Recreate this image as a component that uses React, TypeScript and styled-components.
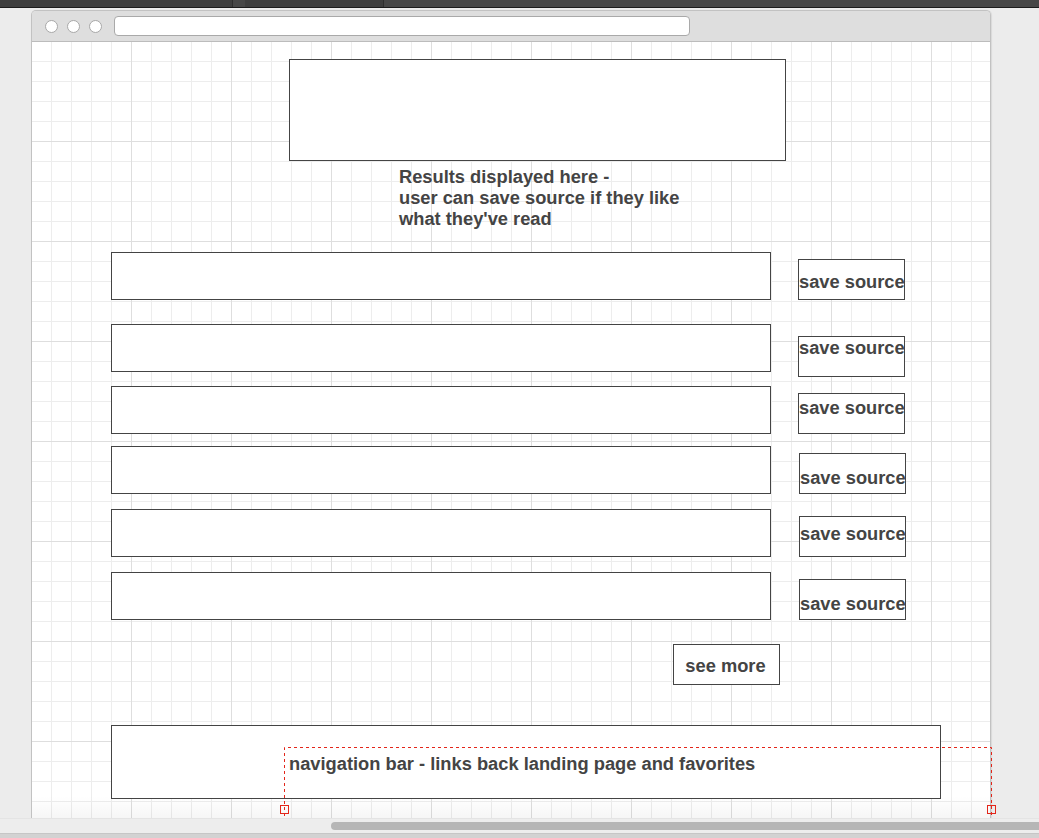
import { FC } from 'react';
import styled, { createGlobalStyle } from 'styled-components';

const GlobalStyle = createGlobalStyle`
  html, body {
    margin: 0;
    padding: 0;
    background: #ececec;
    overflow: hidden;
  }
  body {
    font-family: 'Liberation Sans', Arial, Helvetica, sans-serif;
  }
`;

const Page = styled.div`
  width: 1039px;
  height: 838px;
  display: flex;
  flex-direction: column;
  overflow: hidden;
  background: #ececec;
`;

const TopStrip = styled.div`
  height: 7px;
  flex-shrink: 0;
  display: flex;
  gap: 12px;
  background: #474747;
  border-bottom: 1px solid #1c1c1c;
`;

const Tab = styled.div<{ $w: number }>`
  width: ${(p) => p.$w}px;
  background: #3e3e3e;
  border-right: 1px solid #2e2e2e;
`;

const Stage = styled.div`
  height: 810px;
  flex-shrink: 0;
  box-sizing: border-box;
  padding: 2px 0 0 31px;
  display: flex;
`;

const Window = styled.div`
  width: 960px;
  display: flex;
  flex-direction: column;
  box-sizing: border-box;
  border: 1px solid #c2c2c2;
  border-bottom: none;
  border-radius: 5px 5px 0 0;
  box-shadow: 1px 0 1px rgba(0, 0, 0, 0.08);
`;

const TitleBar = styled.div`
  height: 31px;
  flex-shrink: 0;
  display: flex;
  align-items: center;
  gap: 9px;
  padding-left: 13px;
  box-sizing: border-box;
  background: #dedede;
  border-bottom: 1px solid #bcbcbc;
  border-radius: 4px 4px 0 0;
`;

const Light = styled.span`
  width: 13px;
  height: 13px;
  border-radius: 50%;
  box-sizing: border-box;
  background: #fff;
  border: 1px solid #a8a8a8;
`;

const AddressBar = styled.div`
  width: 576px;
  height: 20px;
  margin-left: 3px;
  box-sizing: border-box;
  background: #fff;
  border: 1px solid #a9a9a9;
  border-radius: 4px;
`;

const Canvas = styled.div`
  position: relative;
  flex: 1;
  display: flex;
  flex-direction: column;
  align-items: flex-start;
  padding-top: 17px;
  box-sizing: border-box;
  background-color: #fff;
  background-image: linear-gradient(to bottom, transparent 754px, rgba(0, 0, 0, 0.035)),
    linear-gradient(to right, #dedede 1px, transparent 1px),
    linear-gradient(to bottom, #dedede 1px, transparent 1px),
    linear-gradient(to right, #ededed 1px, transparent 1px),
    linear-gradient(to bottom, #ededed 1px, transparent 1px);
  background-size: 100% 100%, 100px 100px, 100px 100px, 20px 20px, 20px 20px;
  background-position: 0 0, -1px -1px, -1px -1px, -1px -1px, -1px -1px;
  font-weight: bold;
  color: #444;
  font-size: 18.3px;
`;

const Frame = styled.div`
  box-sizing: border-box;
  background: #fff;
  border: 1px solid #444;
`;

const HeroBox = styled(Frame)`
  margin-left: 257px;
  width: 497px;
  height: 102px;
`;

const Caption = styled.div`
  margin: 5px 0 0 367px;
  line-height: 21px;
  white-space: pre-line;
`;

const ResultsList = styled.div`
  margin-top: 23px;
  display: flex;
  flex-direction: column;
`;

const ResultRow = styled.div<{ $gap: number }>`
  display: flex;
  align-items: flex-end;
  margin: ${(p) => p.$gap}px 0 0 79px;
`;

const ResultBox = styled(Frame)`
  width: 660px;
  height: 48px;
`;

const SaveButton = styled(Frame)<{ $pad: number; $drop: number; $shift: number }>`
  width: 107px;
  height: 41px;
  margin-left: ${(p) => 27 + p.$shift}px;
  margin-bottom: ${(p) => -p.$drop}px;
  padding-top: ${(p) => p.$pad}px;
  line-height: 21px;
  text-align: center;
  white-space: nowrap;
`;

const SeeMore = styled(Frame)`
  margin: 24px 0 0 641px;
  width: 107px;
  height: 41px;
  display: flex;
  align-items: center;
  justify-content: center;
  padding: 3px 2px 0 0;
`;

const NavBar = styled(Frame)`
  margin: 40px 0 0 79px;
  width: 830px;
  height: 74px;
  display: flex;
  align-items: center;
  padding: 3px 0 0 177px;
`;

const Selection = styled.svg`
  position: absolute;
  z-index: 2;
  left: 247px;
  top: 704px;
  overflow: visible;
  pointer-events: none;
`;

const ScrollBand = styled.div`
  height: 15px;
  flex-shrink: 0;
  display: flex;
  align-items: center;
  padding-left: 331px;
  background: #ededed;
  border-top: 1px solid #e4e4e4;
  box-sizing: border-box;
`;

const Thumb = styled.div`
  flex: 1;
  height: 8px;
  border-radius: 4px 0 0 4px;
  background: #b6b6b6;
`;

const BottomEdge = styled.div`
  flex: 1;
  background: #d2d2d2;
  border-top: 1px solid #c6c6c6;
`;

const rows = [
  { gap: 0, pad: 11, drop: 0, shift: 0 },
  { gap: 24, pad: 0, drop: 5, shift: 0 },
  { gap: 14, pad: 3, drop: 0, shift: 0 },
  { gap: 12, pad: 13, drop: 0, shift: 1 },
  { gap: 15, pad: 6, drop: 0, shift: 1 },
  { gap: 15, pad: 13, drop: 0, shift: 1 },
];

const red = '#e3261a';

const App: FC = () => (
  <>
    <GlobalStyle />
    <Page>
      <TopStrip>
        <Tab $w={232} />
        <Tab $w={138} />
      </TopStrip>
      <Stage>
        <Window>
          <TitleBar>
            <Light />
            <Light />
            <Light />
            <AddressBar />
          </TitleBar>
          <Canvas>
            <HeroBox />
            <Caption>
              {'Results displayed here -\nuser can save source if they like\nwhat they\'ve read'}
            </Caption>
            <ResultsList>
              {rows.map((r, i) => (
                <ResultRow key={i} $gap={r.gap}>
                  <ResultBox />
                  <SaveButton $pad={r.pad} $drop={r.drop} $shift={r.shift}>
                    save source
                  </SaveButton>
                </ResultRow>
              ))}
            </ResultsList>
            <SeeMore>see more</SeeMore>
            <NavBar>navigation bar - links back landing page and favorites</NavBar>
            <Selection width="720" height="72">
              <path
                d="M5.5 70 V1.5 H712.5 V70"
                fill="none"
                stroke={red}
                strokeWidth="1"
                strokeDasharray="3 3"
              />
              <rect x="1.5" y="59.5" width="8" height="8" fill="none" stroke={red} />
              <rect x="708.5" y="59.5" width="8" height="8" fill="none" stroke={red} />
            </Selection>
          </Canvas>
        </Window>
      </Stage>
      <ScrollBand>
        <Thumb />
      </ScrollBand>
      <BottomEdge />
    </Page>
  </>
);

export default App;
